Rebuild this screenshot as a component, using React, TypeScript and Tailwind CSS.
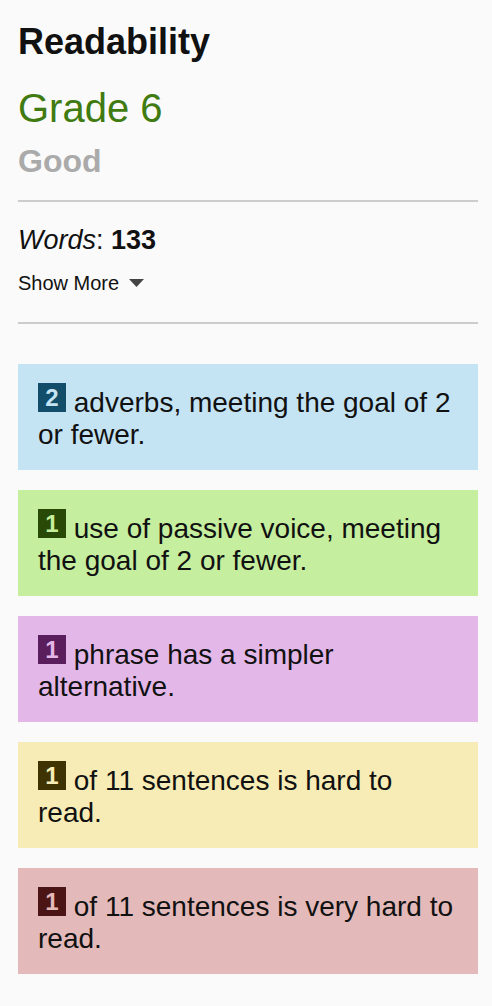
const items = [
    {n: 2, text: "adverbs, meeting the goal of 2 or fewer.", bg: "bg-[#c4e3f3]", badge: "bg-[#124d69] text-[#c4e3f3]"},
    {n: 1, text: "use of passive voice, meeting the goal of 2 or fewer.", bg: "bg-[#c5ee9e]", badge: "bg-[#284a06] text-[#c5ee9e]"},
    {n: 1, text: "phrase has a simpler alternative.", bg: "bg-[#e3b7e8]", badge: "bg-[#5a1e5c] text-[#e3b7e8]"},
    {n: 1, text: "of 11 sentences is hard to read.", bg: "bg-[#f7ecb5]", badge: "bg-[#3f3303] text-[#f7ecb5]"},
    {n: 1, text: "of 11 sentences is very hard to read.", bg: "bg-[#e4b9b9]", badge: "bg-[#4b1516] text-[#e4b9b9]"},
];

export default function App() {
    return <div className="h-screen overflow-hidden w-full bg-[#fafafa] pl-[18px] pr-[14px] pt-[22px] font-['Liberation_Sans',Arial,sans-serif] text-[#111]">
        <h1 className="text-[36px] leading-[40px] font-bold">Readability</h1>
        <div className="mt-[24px] text-[40px] leading-[44px] text-[#3f7b10]">Grade 6</div>
        <div className="mt-[13px] text-[32px] leading-[36px] font-bold text-[#aaaaaa]">Good</div>

        <div className="mt-[21px] h-[2px] bg-[#cccccc]"/>

        <div className="mt-[23px] text-[27px] leading-[30px]">
            <i>Words</i>: <b>133</b>
        </div>
        <button className="mt-[16px] flex items-center gap-[10px] text-[20px] leading-[24px]">
            Show More
            <svg width="15" height="8" viewBox="0 0 15 8">
                <polygon points="0,0 15,0 7.5,8" fill="#444444"/>
            </svg>
        </button>

        <div className="mt-[27px] h-[2px] bg-[#cccccc]"/>

        <div className="mt-[40px] flex flex-col gap-5">
            {items.map((item, i) => (
                <div key={i} className={`${item.bg} pt-[19px] pb-[19px] pl-5 pr-4 text-[28px] leading-[32px]`}>
                    <span className={`${item.badge} inline-block overflow-hidden h-[29px] w-[28px] pt-[1px] text-center text-[24px] leading-[28px] font-bold`}>{item.n}</span>
                    {" "}{item.text}
                </div>
            ))}
        </div>
    </div>
}
